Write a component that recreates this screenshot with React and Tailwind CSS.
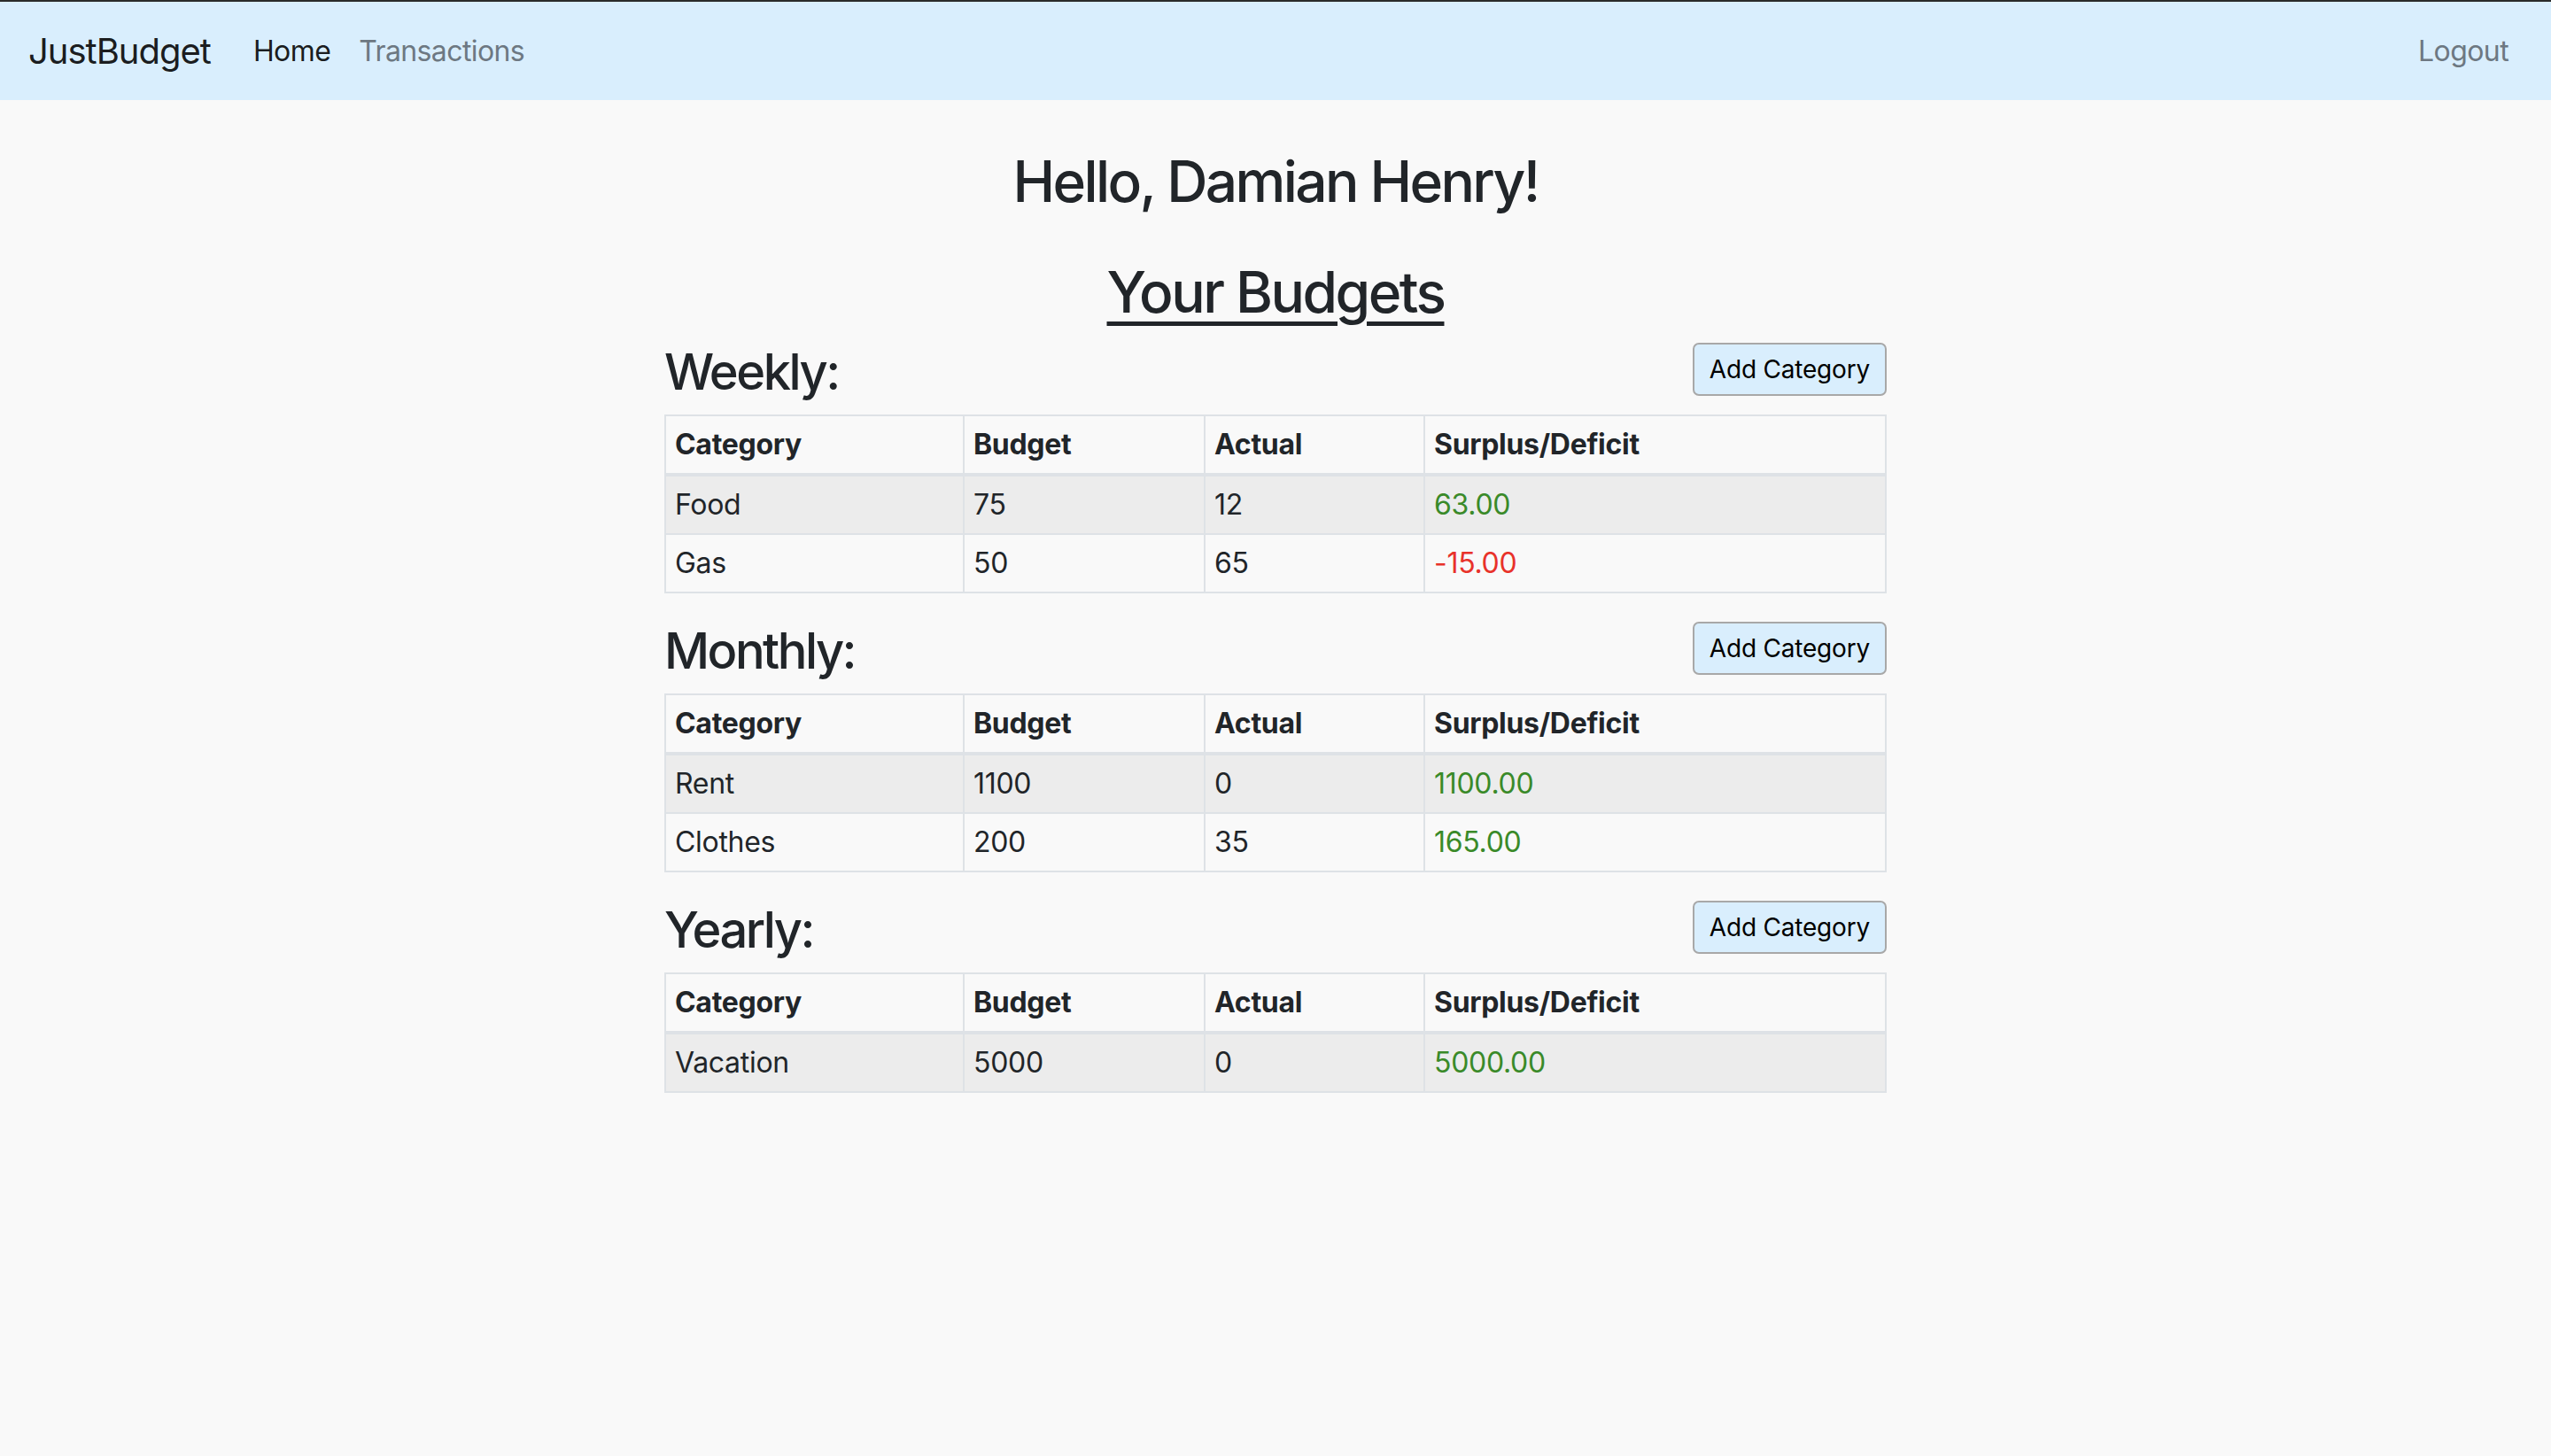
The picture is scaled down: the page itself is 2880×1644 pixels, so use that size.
import React from "react";

const font = { fontFamily: "Inter, 'Noto Sans', 'Liberation Sans', sans-serif" };

const sections = [
  {
    title: "Weekly:",
    rows: [
      ["Food", "75", "12", "63.00", true],
      ["Gas", "50", "65", "-15.00", false],
    ],
  },
  {
    title: "Monthly:",
    rows: [
      ["Rent", "1100", "0", "1100.00", true],
      ["Clothes", "200", "35", "165.00", true],
    ],
  },
  {
    title: "Yearly:",
    rows: [["Vacation", "5000", "0", "5000.00", true]],
  },
];

function BudgetTable({ rows }) {
  return (
    <table className="w-full table-fixed border-collapse mb-[32px] text-[32px] leading-[48px] tracking-[-0.3px] text-[#212529]">
      <colgroup>
        <col className="w-[337px]" />
        <col className="w-[272px]" />
        <col className="w-[248px]" />
        <col />
      </colgroup>
      <thead>
        <tr>
          {["Category", "Budget", "Actual", "Surplus/Deficit"].map((h) => (
            <th
              key={h}
              className="text-left font-bold border-2 border-b-4 border-[#dee2e6] px-[10px] py-[8px]"
            >
              {h}
            </th>
          ))}
        </tr>
      </thead>
      <tbody>
        {rows.map((r, i) => (
          <tr key={r[0]} className={i % 2 === 0 ? "bg-[#ececec]" : ""}>
            <td className="border-2 border-[#dee2e6] px-[10px] py-[8px]">{r[0]}</td>
            <td className="border-2 border-[#dee2e6] px-[10px] py-[8px]">{r[1]}</td>
            <td className="border-2 border-[#dee2e6] px-[10px] py-[8px]">{r[2]}</td>
            <td
              className={
                "border-2 border-[#dee2e6] px-[10px] py-[8px] " +
                (r[4] ? "text-[#3a8a29]" : "text-[#e8322a]")
              }
            >
              {r[3]}
            </td>
          </tr>
        ))}
      </tbody>
    </table>
  );
}

export default function App() {
  return (
    <div className="min-h-[1644px] bg-[#f9f9f9] text-[#212529]" style={font}>
      <nav className="border-t-2 border-[#2a2a2a] bg-[#d9eefd] h-[113px] flex items-center px-[32px]">
        <span className="text-[40px] leading-[60px] tracking-[-1px] text-[rgba(0,0,0,0.9)] mr-[32px]">JustBudget</span>
        <span className="text-[32px] leading-[48px] tracking-[-0.6px] px-[16px] text-[rgba(0,0,0,0.9)]">Home</span>
        <span className="text-[32px] leading-[48px] tracking-[-0.6px] px-[16px] text-[#6d7882]">Transactions</span>
        <span className="ml-auto text-[32px] leading-[48px] tracking-[-0.6px] px-[16px] text-[#6d7882]">Logout</span>
      </nav>
      <main className="w-[1380px] mx-auto pt-[53px]">
        <h2 className="text-center text-[64px] leading-[77px] font-medium mb-[48px] tracking-[-2.6px]">
          Hello, Damian Henry!
        </h2>
        <h2 className="text-center text-[64px] leading-[77px] font-medium underline decoration-[5px] underline-offset-[10px] mb-[19px] tracking-[-2.5px]">
          Your Budgets
        </h2>
        {sections.map((s) => (
          <section key={s.title}>
            <div className="flex justify-between items-start mb-[14px]">
              <h3 className="text-[56px] leading-[67px] font-medium tracking-[-2.5px]">{s.title}</h3>
              <button className="bg-[#d9eefd] border-2 border-[#a8a8a8] rounded-[7px] px-[17px] py-[7px] text-[28px] leading-[42px] tracking-[-0.2px] text-black">
                Add Category
              </button>
            </div>
            <BudgetTable rows={s.rows} />
          </section>
        ))}
      </main>
    </div>
  );
}
